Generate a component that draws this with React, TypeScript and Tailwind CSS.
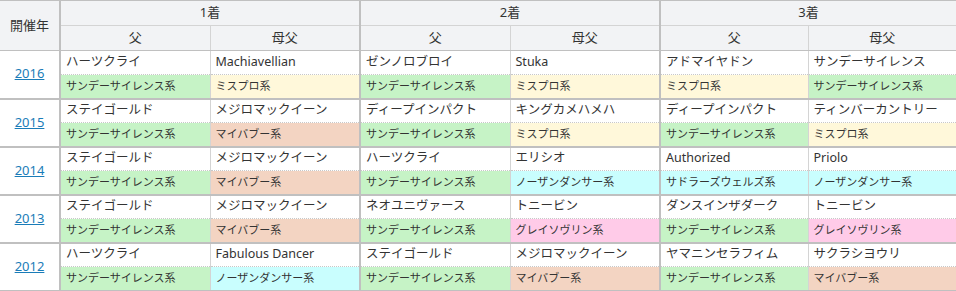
import React from 'react';

type Cell = { name: string; line: string; tone: 'g' | 'y' | 's' | 'c' | 'p' };

const toneClass: Record<Cell['tone'], string> = {
  g: 'bg-[#c6f3c6]',
  y: 'bg-[#fff8da]',
  s: 'bg-[#f3d4c2]',
  c: 'bg-[#c9fefe]',
  p: 'bg-[#ffcbe8]',
};

const rows: { year: string; cells: Cell[] }[] = [
  {
    year: '2016',
    cells: [
      { name: 'ハーツクライ', line: 'サンデーサイレンス系', tone: 'g' },
      { name: 'Machiavellian', line: 'ミスプロ系', tone: 'y' },
      { name: 'ゼンノロブロイ', line: 'サンデーサイレンス系', tone: 'g' },
      { name: 'Stuka', line: 'ミスプロ系', tone: 'y' },
      { name: 'アドマイヤドン', line: 'ミスプロ系', tone: 'y' },
      { name: 'サンデーサイレンス', line: 'サンデーサイレンス系', tone: 'g' },
    ],
  },
  {
    year: '2015',
    cells: [
      { name: 'ステイゴールド', line: 'サンデーサイレンス系', tone: 'g' },
      { name: 'メジロマックイーン', line: 'マイバブー系', tone: 's' },
      { name: 'ディープインパクト', line: 'サンデーサイレンス系', tone: 'g' },
      { name: 'キングカメハメハ', line: 'ミスプロ系', tone: 'y' },
      { name: 'ディープインパクト', line: 'サンデーサイレンス系', tone: 'g' },
      { name: 'ティンバーカントリー', line: 'ミスプロ系', tone: 'y' },
    ],
  },
  {
    year: '2014',
    cells: [
      { name: 'ステイゴールド', line: 'サンデーサイレンス系', tone: 'g' },
      { name: 'メジロマックイーン', line: 'マイバブー系', tone: 's' },
      { name: 'ハーツクライ', line: 'サンデーサイレンス系', tone: 'g' },
      { name: 'エリシオ', line: 'ノーザンダンサー系', tone: 'c' },
      { name: 'Authorized', line: 'サドラーズウェルズ系', tone: 'c' },
      { name: 'Priolo', line: 'ノーザンダンサー系', tone: 'c' },
    ],
  },
  {
    year: '2013',
    cells: [
      { name: 'ステイゴールド', line: 'サンデーサイレンス系', tone: 'g' },
      { name: 'メジロマックイーン', line: 'マイバブー系', tone: 's' },
      { name: 'ネオユニヴァース', line: 'サンデーサイレンス系', tone: 'g' },
      { name: 'トニービン', line: 'グレイソヴリン系', tone: 'p' },
      { name: 'ダンスインザダーク', line: 'サンデーサイレンス系', tone: 'g' },
      { name: 'トニービン', line: 'グレイソヴリン系', tone: 'p' },
    ],
  },
  {
    year: '2012',
    cells: [
      { name: 'ハーツクライ', line: 'サンデーサイレンス系', tone: 'g' },
      { name: 'Fabulous Dancer', line: 'ノーザンダンサー系', tone: 'c' },
      { name: 'ステイゴールド', line: 'サンデーサイレンス系', tone: 'g' },
      { name: 'メジロマックイーン', line: 'マイバブー系', tone: 's' },
      { name: 'ヤマニンセラフィム', line: 'サンデーサイレンス系', tone: 'g' },
      { name: 'サクラシヨウリ', line: 'マイバブー系', tone: 's' },
    ],
  },
];

// thick separator before each 着 group, thin between 父 / 母父
const sideBorder = (i: number) =>
  i % 2 === 0 ? 'border-l-2 border-l-[#c0c0c0]' : 'border-l border-l-[#d4d4d4]';

export default function App() {
  return (
    <div
      className="w-[956px] h-[291px] overflow-hidden bg-white text-[#333]"
      style={{ fontFamily: '"Noto Sans", "Noto Sans CJK JP", sans-serif' }}
    >
      <table className="w-[956px] table-fixed border-collapse border-t border-t-[#c0c0c0]">
        <colgroup>
          <col className="w-[60px]" />
          <col className="w-[150px]" />
          <col className="w-[150px]" />
          <col className="w-[150px]" />
          <col className="w-[150px]" />
          <col className="w-[148px]" />
          <col className="w-[148px]" />
        </colgroup>
        <thead className="bg-[#f2f3f5] text-[13px]">
          <tr className="h-[25px]">
            <th rowSpan={2} className="font-normal border-b border-b-[#c0c0c0] p-0">
              開催年
            </th>
            {['1着', '2着', '3着'].map((t) => (
              <th
                key={t}
                colSpan={2}
                className="font-normal p-0 border-l-2 border-l-[#c0c0c0] border-b border-b-[#d4d4d4]"
              >
                {t}
              </th>
            ))}
          </tr>
          <tr className="h-[25px]">
            {[0, 1, 2, 3, 4, 5].map((i) => (
              <th
                key={i}
                className={`font-normal p-0 border-b border-b-[#c0c0c0] ${sideBorder(i)}`}
              >
                {i % 2 === 0 ? '父' : '母父'}
              </th>
            ))}
          </tr>
        </thead>
        <tbody>
          {rows.map((r) => (
            <React.Fragment key={r.year}>
              <tr className="h-[24px] text-[12.5px]">
                <td
                  rowSpan={2}
                  className="text-center p-0 border-b-2 border-b-[#c0c0c0] align-middle"
                >
                  <a href="#" className="text-[13px] text-[#1a7cb8] underline">
                    {r.year}
                  </a>
                </td>
                {r.cells.map((c, i) => (
                  <td
                    key={i}
                    className={`px-[5px] py-0 whitespace-nowrap overflow-hidden border-b [border-bottom-style:dotted] border-b-[#c8c8c8] ${sideBorder(i)}`}
                  >
                    {c.name}
                  </td>
                ))}
              </tr>
              <tr className="h-[24px] text-[11px]">
                {r.cells.map((c, i) => (
                  <td
                    key={i}
                    className={`px-[5px] py-0 whitespace-nowrap overflow-hidden border-b-2 border-b-[#c0c0c0] ${sideBorder(i)} ${toneClass[c.tone]}`}
                  >
                    {c.line}
                  </td>
                ))}
              </tr>
            </React.Fragment>
          ))}
        </tbody>
      </table>
    </div>
  );
}
